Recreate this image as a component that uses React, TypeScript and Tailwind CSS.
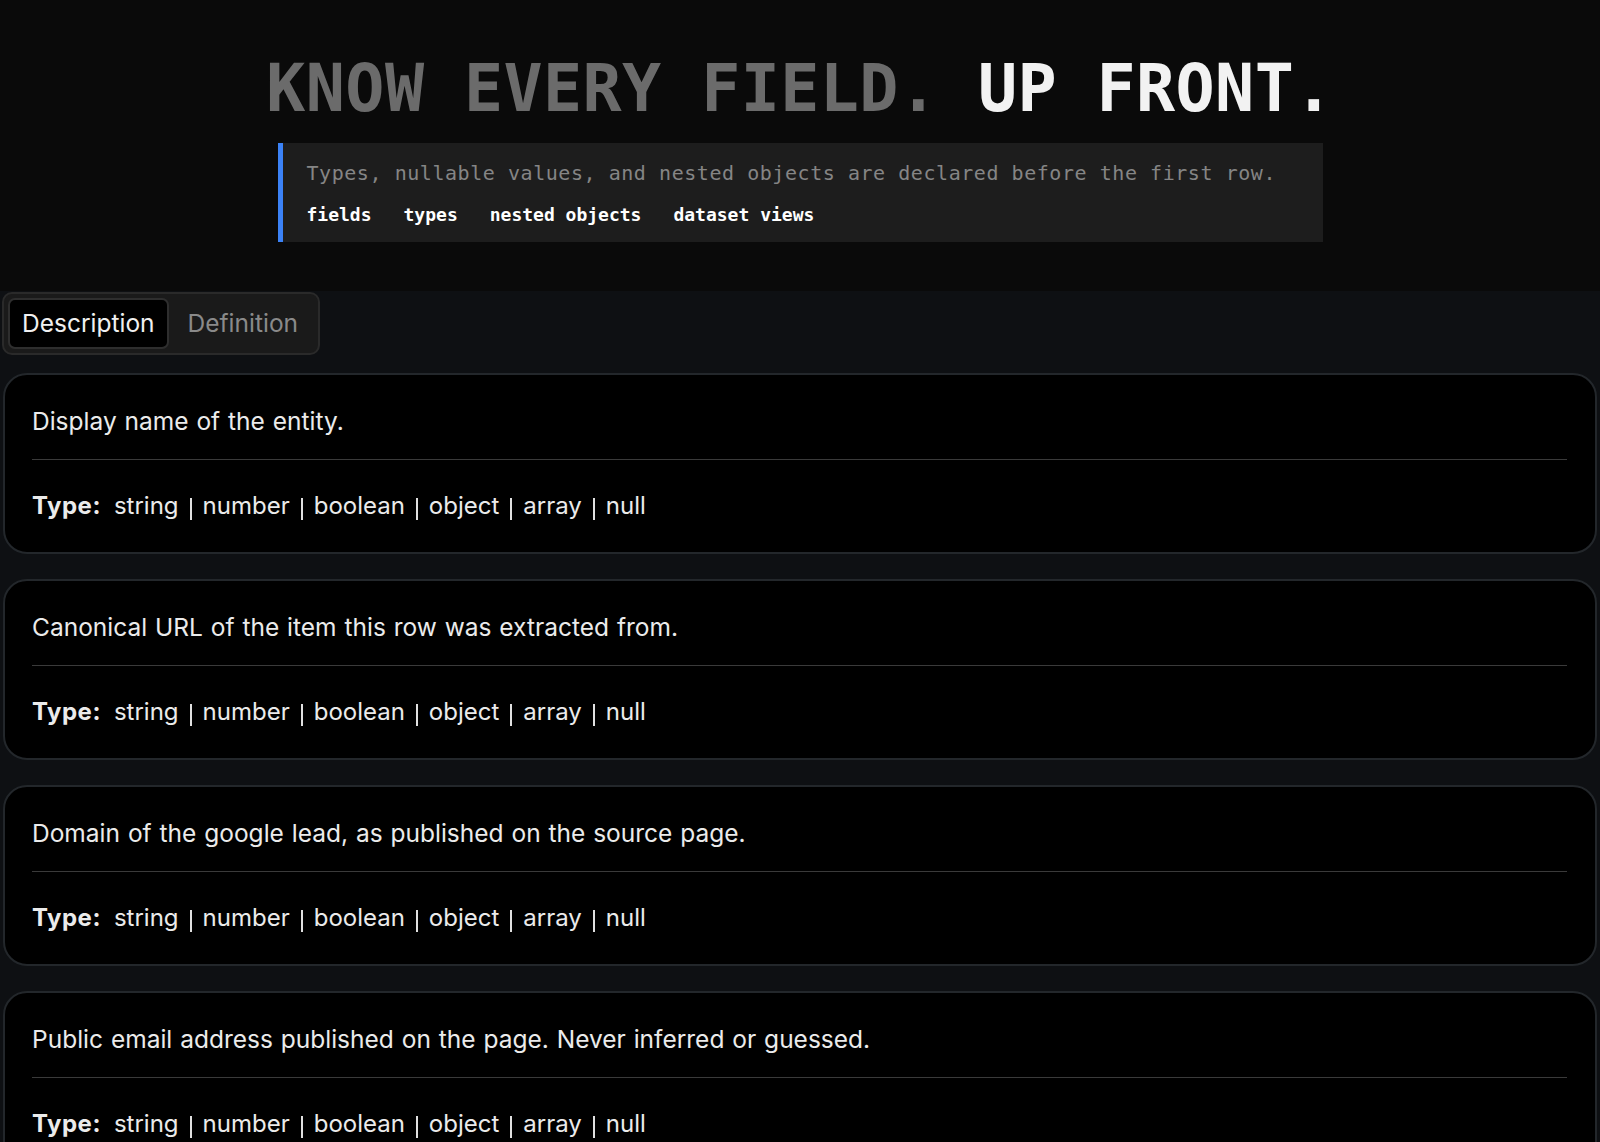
import React from 'react';

const fields = [
  'Display name of the entity.',
  'Canonical URL of the item this row was extracted from.',
  'Domain of the google lead, as published on the source page.',
  'Public email address published on the page. Never inferred or guessed.',
];

const types = ['string', 'number', 'boolean', 'object', 'array', 'null'];

function App() {
  return (
    <div className="min-h-screen bg-[#0e1013] font-['Inter',sans-serif]">
      {/* Hero */}
      <header className="bg-[#0a0a0a] pt-[57px] pb-[49px] flex flex-col items-center">
        <h1 className="font-['DejaVu_Sans_Mono',monospace] text-[65px] leading-[64px] font-bold tracking-[0.4px]">
          <span className="text-[#6b6b6b]">KNOW EVERY FIELD.</span>{' '}
          <span className="text-[#f2f2f2]">UP FRONT.</span>
        </h1>
        <div className="mt-[22px] w-[1045px] bg-[#1d1d1d] border-l-[5px] border-[#3b82f6] pl-[24px] pt-[16px] pb-[15px] font-['DejaVu_Sans_Mono',monospace]">
          <p className="text-[20px] leading-[28px] text-[#858585] tracking-[0.55px]">
            Types, nullable values, and nested objects are declared before the first row.
          </p>
          <div className="mt-[16px] flex gap-[32px] text-[18px] leading-[24px] font-bold text-white">
            <span>fields</span>
            <span>types</span>
            <span>nested objects</span>
            <span>dataset views</span>
          </div>
        </div>
      </header>

      {/* Tabs + field cards */}
      <section className="pt-[1px] px-[3px]">
        <div className="inline-flex items-center gap-[4px] p-[4px] rounded-[10px] border-2 border-[#2a2a2a] bg-[#1a1a1a] -ml-[1px]">
          <button className="h-[51px] px-[12px] rounded-[7px] border-2 border-[#2e2e2e] bg-black text-[24.5px] text-[#f0f0f0]">
            Description
          </button>
          <button className="h-[51px] pl-[15px] pr-[16px] text-[24.5px] text-[#8a8a8a]">Definition</button>
        </div>

        <div className="mt-[18px] flex flex-col gap-[25px] pb-[20px]">
          {fields.map((f) => (
            <FieldCard key={f} description={f} />
          ))}
        </div>
      </section>
    </div>
  );
}

function FieldCard({ description }: { description: string }) {
  return (
    <div className="bg-black border-2 border-[#23272b] rounded-[24px] pl-[27px] pr-[28px] pt-[30px] pb-[30px]">
      <p className="text-[24.5px] leading-[32px] text-[#ebebeb] [word-spacing:1px]">{description}</p>
      <div className="mt-[22px] h-px bg-[#3a3a3a]" />
      <div className="mt-[30px] flex items-center text-[24px] leading-[32px] text-[#ebebeb]">
        <span className="font-bold tracking-[0.5px] mr-[13px]">Type:</span>
        {types.map((t, i) => (
          <React.Fragment key={t}>
            {i > 0 && <span className="mx-[11px] mt-[6px] w-[2px] h-[22px] bg-[#e0e0e0]" />}
            <span>{t}</span>
          </React.Fragment>
        ))}
      </div>
    </div>
  );
}

export default App;
